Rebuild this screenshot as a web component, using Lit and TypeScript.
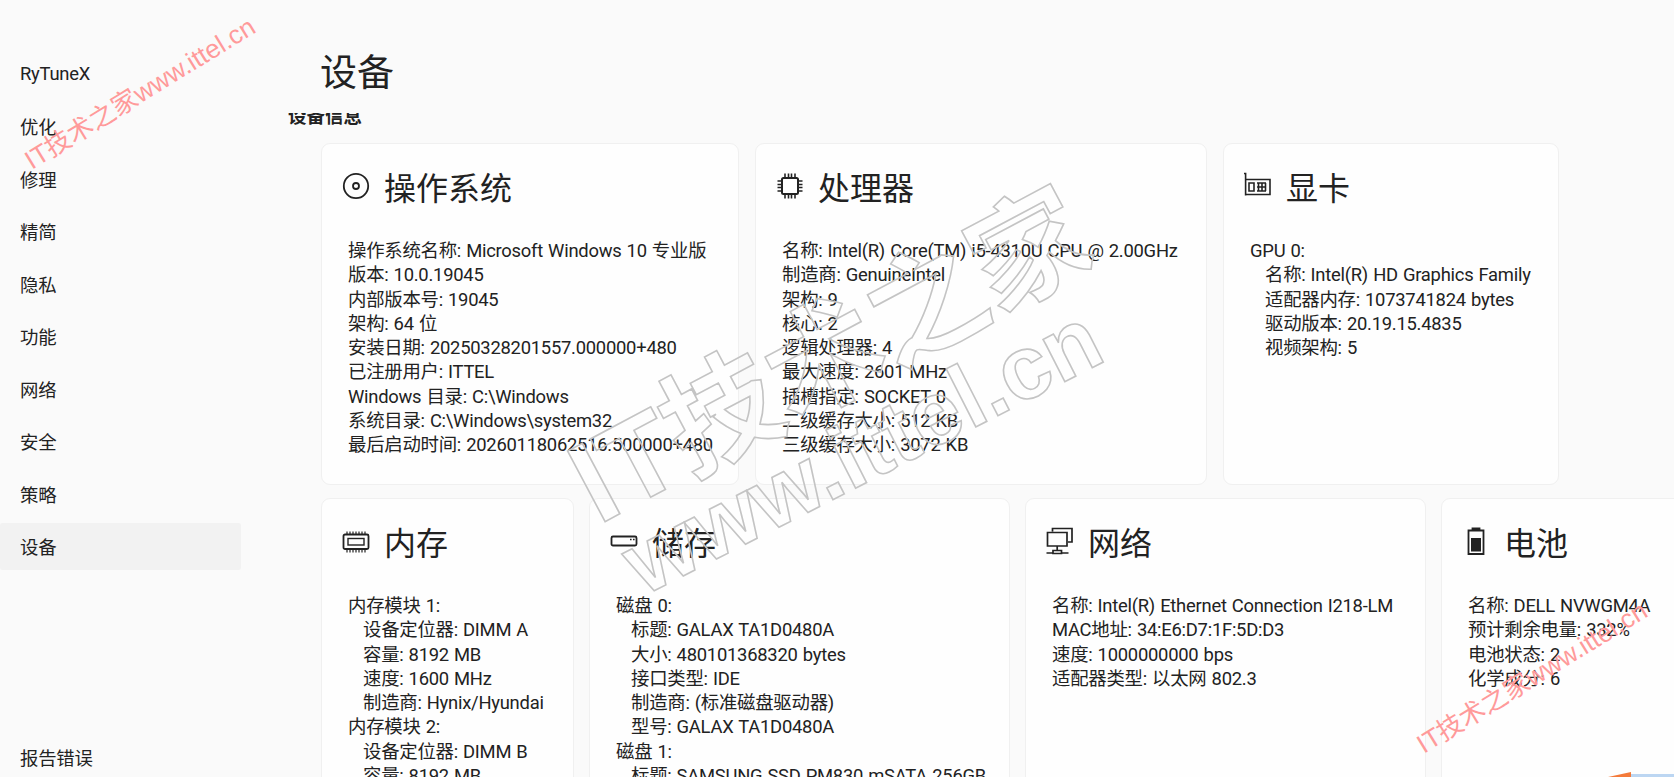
import { LitElement, html, css, svg } from "lit";
import { customElement } from "lit/decorators.js";

type Line = [string, boolean?];
const p = (s: string): Line => [s];
const i = (s: string): Line => [s, true];

const ICONS: Record<string, unknown> = {
  os: svg`<circle cx="14" cy="14" r="12.2" fill="none" stroke-width="1.8"/><circle cx="14" cy="14" r="3" fill="none" stroke-width="1.8"/>`,
  cpu: svg`<rect x="6" y="6" width="16" height="16" rx="1.5" fill="none" stroke-width="2"/><path fill="none" stroke-width="1.6" d="M9 1.5v4M12.5 1.5v4M15.5 1.5v4M19 1.5v4M9 22.5v4M12.5 22.5v4M15.5 22.5v4M19 22.5v4M1.5 9h4M1.5 12.5h4M1.5 15.5h4M1.5 19h4M22.5 9h4M22.5 12.5h4M22.5 15.5h4M22.5 19h4"/>`,
  gpu: svg`<path fill="none" stroke-width="1.6" d="M0 1.5h1.6v22M1.6 7.5h24.4v15H1.6M5 11h5v8H5zM13 11h9M13 15h9M13 19h9M14.5 11v8M18 11v8M21.5 11v8"/>`,
  ram: svg`<rect x="1.5" y="7.5" width="25" height="14.5" rx="1.5" fill="none" stroke-width="1.8"/><rect x="6" y="11.5" width="16" height="6.5" fill="none" stroke-width="1.4"/><path fill="none" stroke-width="1.2" d="M5 4.5v3M8 4.5v3M11 4.5v3M14 4.5v3M17 4.5v3M20 4.5v3M23 4.5v3M5 22v3.5M8 22v3.5M11 22v3.5M14 22v3.5M17 22v3.5M20 22v3.5M23 22v3.5"/>`,
  disk: svg`<rect x="1.5" y="9.5" width="25" height="9" rx="1.5" fill="none" stroke-width="1.8"/><path fill="none" stroke-width="1.6" d="M20 12.5h1.6M23 12.5h1.6"/>`,
  net: svg`<path fill="none" stroke-width="1.7" d="M6.5 4.5V1.5H26v13.5h-4M1.5 5.5h19.5v13.5H1.5zM11.2 19v4M0.5 26h6.5M15.5 26h7M7 23.5h8.5V26.5H7z"/>`,
  bat: svg`<path fill="none" stroke-width="1.8" d="M6.5 3.5h15v23.5h-15zM10.5 3.5v-2h7v2"/><rect x="9" y="11" width="10" height="13.5" stroke="none" class="fill"/>`,
};

const ROW1 = [
  {
    k: "os", t: "操作系统", c: "w-os", lines: [
      p("操作系统名称: Microsoft Windows 10 专业版"), p("版本: 10.0.19045"), p("内部版本号: 19045"), p("架构: 64 位"),
      p("安装日期: 20250328201557.000000+480"), p("已注册用户: ITTEL"), p("Windows 目录: C:\\Windows"),
      p("系统目录: C:\\Windows\\system32"), p("最后启动时间: 20260118062516.500000+480"),
    ],
  },
  {
    k: "cpu", t: "处理器", c: "w-cpu", lines: [
      p("名称: Intel(R) Core(TM) i5-4310U CPU @ 2.00GHz"), p("制造商: GenuineIntel"), p("架构: 9"), p("核心: 2"),
      p("逻辑处理器: 4"), p("最大速度: 2601 MHz"), p("插槽指定: SOCKET 0"), p("二级缓存大小: 512 KB"), p("三级缓存大小: 3072 KB"),
    ],
  },
  {
    k: "gpu", t: "显卡", c: "w-gpu", lines: [
      p("GPU 0:"), i("名称: Intel(R) HD Graphics Family"), i("适配器内存: 1073741824 bytes"), i("驱动版本: 20.19.15.4835"), i("视频架构: 5"),
    ],
  },
];

const ROW2 = [
  {
    k: "ram", t: "内存", c: "w-ram", lines: [
      p("内存模块 1:"), i("设备定位器: DIMM A"), i("容量: 8192 MB"), i("速度: 1600 MHz"), i("制造商: Hynix/Hyundai"),
      p("内存模块 2:"), i("设备定位器: DIMM B"), i("容量: 8192 MB"), i("速度: 1600 MHz"),
    ],
  },
  {
    k: "disk", t: "储存", c: "w-disk", lines: [
      p("磁盘 0:"), i("标题: GALAX TA1D0480A"), i("大小: 480101368320 bytes"), i("接口类型: IDE"), i("制造商: (标准磁盘驱动器)"),
      i("型号: GALAX TA1D0480A"), p("磁盘 1:"), i("标题: SAMSUNG SSD PM830 mSATA 256GB"), i("大小: 256060514304 bytes"),
    ],
  },
  {
    k: "net", t: "网络", c: "w-net", lines: [
      p("名称: Intel(R) Ethernet Connection I218-LM"), p("MAC地址: 34:E6:D7:1F:5D:D3"), p("速度: 1000000000 bps"), p("适配器类型: 以太网 802.3"),
    ],
  },
  {
    k: "bat", t: "电池", c: "w-bat", lines: [
      p("名称: DELL NVWGM4A"), p("预计剩余电量: 332%"), p("电池状态: 2"), p("化学成分: 6"),
    ],
  },
];

const NAV = ["RyTuneX", "优化", "修理", "精简", "隐私", "功能", "网络", "安全", "策略", "设备"];

@customElement("app-root")
export class AppRoot extends LitElement {
  static styles = css`
    :host {
      display: block;
      width: 1674px;
      height: 777px;
      overflow: hidden;
      position: relative;
      background: #fafafa;
      color: #222;
      font-family: "Roboto", "Noto Sans CJK SC", sans-serif;
      font-size: 18.4px;
      letter-spacing: -0.25px;
      word-spacing: 0.8px;
    }
    .shell { display: flex; height: 777px; }
    .nav {
      flex: none;
      width: 241px;
      padding: 50px 0 6px;
      display: flex;
      flex-direction: column;
      box-sizing: border-box;
      height: 777px;
    }
    .nav-item {
      flex: none;
      height: 47px;
      margin-bottom: 5.5px;
      padding-left: 20px;
      display: flex;
      align-items: center;
      border-radius: 2px;
    }
    .nav-item.sel { background: #f2f2f2; }
    .nav-foot { margin-top: auto; padding-left: 20px; line-height: 24px; }
    .main { flex: 1; min-width: 0; display: flex; flex-direction: column; }
    .title {
      flex: none;
      height: 113px;
      box-sizing: border-box;
      padding: 51px 0 0 79px;
      font-size: 37px;
      line-height: 46px;
      letter-spacing: 0;
    }
    .scroller { flex: 1; overflow: hidden; min-height: 0; }
    .section {
      margin: -8px 0 0 47px;
      height: 38px;
      font-size: 18.5px;
      line-height: 24px;
      font-weight: 700;
      letter-spacing: 0;
    }
    .row { display: flex; padding-left: 80px; }
    .r1 { gap: 16px; height: 342px; margin-bottom: 13px; }
    .r2 { gap: 15px; height: 400px; }
    .card {
      flex: none;
      box-sizing: border-box;
      background: #fefefe;
      border: 1px solid #f0f0f0;
      border-radius: 9px;
      padding: 0 0 0 26px;
      overflow: hidden;
    }
    .w-os { width: 418px; }
    .w-cpu { width: 452px; }
    .w-gpu { width: 336px; }
    .w-ram { width: 253px; }
    .w-disk { width: 421px; }
    .w-net { width: 401px; }
    .w-bat { width: 300px; }
    .head {
      display: flex;
      align-items: center;
      height: 42px;
      margin: 20.5px 0 32.5px -6px;
      font-size: 32px;
      letter-spacing: 0;
      white-space: nowrap;
    }
    .head svg { flex: none; width: 28px; height: 28px; margin-right: 14px; stroke: #222; }
    .head svg .fill { fill: #222; }
    .l { line-height: 24.3px; white-space: nowrap; }
    .l.in { padding-left: 15px; }
    .mark {
      position: absolute;
      pointer-events: none;
      white-space: nowrap;
      transform-origin: 0 100%;
      word-spacing: 0;
    }
    .red {
      color: #ff9a9a;
      font-family: "Liberation Sans", "Noto Sans CJK SC", sans-serif;
      font-size: 26px;
      line-height: 30px;
      letter-spacing: 0;
      transform: rotate(-31.5deg);
    }
    .red.a { left: 35px; top: 145px; }
    .red.b { left: 1427px; top: 729px; }
    .big {
      color: transparent;
      -webkit-text-stroke: 1.6px #c4c4c4;
      font-family: "Liberation Sans", "Noto Sans CJK SC", sans-serif;
      font-weight: 700;
      letter-spacing: 0;
    }
    .big.a { left: 611px; top: 415px; font-size: 116px; line-height: 134px; transform: rotate(-28deg); }
    .big.c { left: 653px; top: 511px; font-size: 90px; line-height: 104px; transform: rotate(-27deg); }
    .corner { position: absolute; right: 0; bottom: 0; width: 66px; height: 5px; display: flex; }
    .corner .o { width: 23px; background: #f47a3a; clip-path: polygon(0 100%, 100% 0, 100% 100%); }
    .corner .s { flex: 1; background: #bcd6f2; margin-top: 2px; }
  `;

  private card(c: { k: string; t: string; c: string; lines: Line[] }) {
    return html`<section class="card ${c.c}">
      <div class="head">
        <svg viewBox="0 0 28 28" aria-hidden="true">${ICONS[c.k]}</svg>
        <span>${c.t}</span>
      </div>
      ${c.lines.map((l) => html`<div class="l ${l[1] ? "in" : ""}">${l[0]}</div>`)}
    </section>`;
  }

  render() {
    return html`
      <div class="shell">
        <nav class="nav">
          ${NAV.map((n) => html`<div class="nav-item ${n === "设备" ? "sel" : ""}">${n}</div>`)}
          <div class="nav-foot">报告错误</div>
        </nav>
        <main class="main">
          <div class="title">设备</div>
          <div class="scroller">
            <div class="section">设备信息</div>
            <div class="row r1">${ROW1.map((c) => this.card(c))}</div>
            <div class="row r2">${ROW2.map((c) => this.card(c))}</div>
          </div>
        </main>
      </div>
      <div class="mark big a">IT技术之家</div>
      <div class="mark big c">www.ittel.cn</div>
      <div class="mark red a">IT技术之家www.ittel.cn</div>
      <div class="mark red b">IT技术之家www.ittel.cn</div>
      <div class="corner"><span class="o"></span><span class="s"></span></div>
    `;
  }
}
